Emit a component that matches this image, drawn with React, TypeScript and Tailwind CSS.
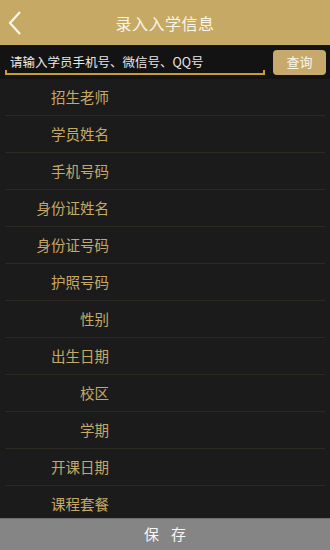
import React from 'react';

const fields = [
  '招生老师',
  '学员姓名',
  '手机号码',
  '身份证姓名',
  '身份证号码',
  '护照号码',
  '性别',
  '出生日期',
  '校区',
  '学期',
  '开课日期',
  '课程套餐',
];

export default function App() {
  return (
    <div
      className="flex flex-col h-[550px] w-[330px] overflow-hidden bg-[#1b1b1b]"
      style={{ fontFamily: '"Noto Sans CJK SC", "Noto Sans", sans-serif' }}
    >
      {/* header */}
      <div className="relative flex items-center justify-center h-[45px] bg-[#c6a964] shrink-0">
        <svg className="absolute left-[7px] top-[11px]" width="16" height="24" viewBox="0 0 16 24">
          <path d="M13 1 L3 12 L13 23" fill="none" stroke="#fbf7ec" strokeWidth="2.2" />
        </svg>
        <span className="text-[16px] text-[#fbf6e8] tracking-[0.5px]">录入入学信息</span>
      </div>

      {/* search */}
      <div className="flex items-center h-[34px] bg-[#131313] shrink-0 pl-[5px] pr-[4px] gap-[8px]">
        <div className="relative flex-1 h-[28px] flex items-center pl-[5px]">
          <span className="text-[12.5px] text-[#e8e8e8] leading-none mt-[1px]">请输入学员手机号、微信号、QQ号</span>
          <div className="absolute left-0 right-0 bottom-[1px] h-[2px] bg-[#c99e2c]" />
          <div className="absolute left-0 bottom-[1px] h-[5px] w-[2px] bg-[#c99e2c]" />
          <div className="absolute right-0 bottom-[1px] h-[5px] w-[2px] bg-[#c99e2c]" />
        </div>
        <button className="w-[53px] h-[25px] rounded-[4px] bg-[#c7aa6b] text-[13px] text-[#fbf6ea] flex items-center justify-center">
          查询
        </button>
      </div>

      {/* form rows */}
      <div className="flex-1 overflow-hidden">
        {fields.map((f, i) => (
          <div key={f} className="px-[5px]">
            <div
              className={
                'h-[37px] flex items-center ' +
                (i < fields.length - 1 ? 'border-b border-[#2b2922]' : '')
              }
            >
              <span className="w-[104px] text-right text-[14.5px] text-[#c7a967] -mt-[1px]">{f}</span>
            </div>
          </div>
        ))}
      </div>

      {/* save */}
      <div className="h-[32px] shrink-0 bg-[#858585] border-t border-[#6e6e6e] flex items-center justify-center">
        <span className="text-[15px] text-[#f6f6f6] tracking-[12px] pl-[12px]">保存</span>
      </div>
    </div>
  );
}
